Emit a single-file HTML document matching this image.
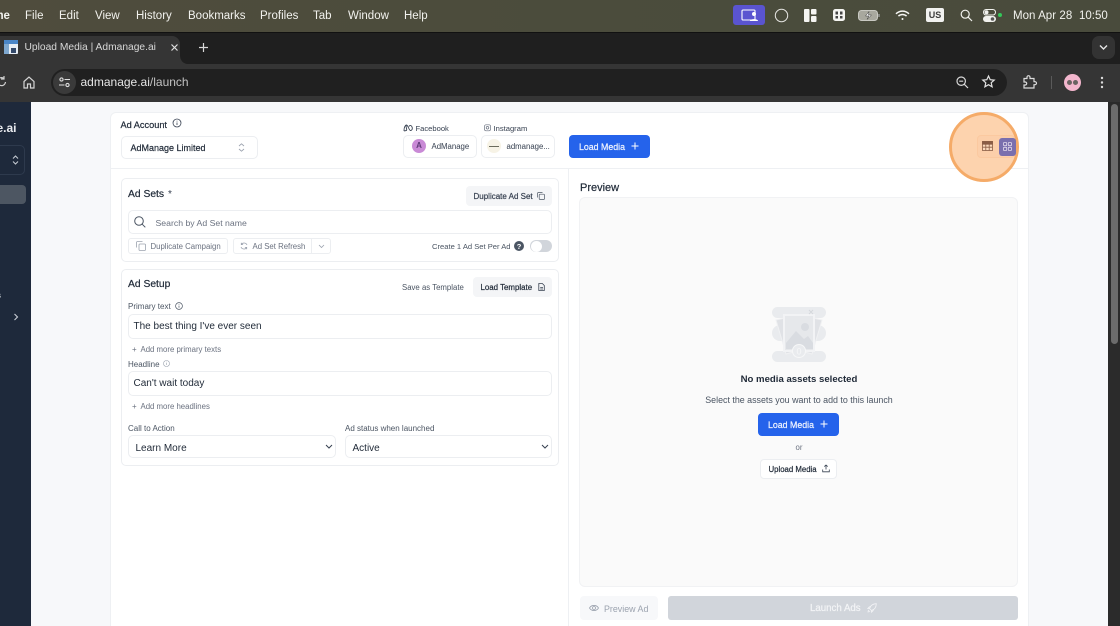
<!DOCTYPE html>
<html lang="en">
<head>
<meta charset="utf-8">
<title>Upload Media | Admanage.ai</title>
<style>
html,body{margin:0;padding:0;width:1120px;height:626px;overflow:hidden;background:#f7f8fa}
body{font-family:"Liberation Sans",sans-serif;position:relative}
#root{position:absolute;left:0;top:0;width:1120px;height:626px;overflow:hidden;filter:blur(.3px)}
.a{position:absolute;box-sizing:border-box}
.t{position:absolute;white-space:nowrap;line-height:14px;height:14px;margin-top:1px}
[style*="font-weight:500"]{-webkit-text-stroke:.2px currentColor}
.m{color:#f2f2ee;font-size:11.5px;top:8px}
.box{background:#fff;border:1px solid #eceef1;border-radius:5px}
.l{font-size:8px;color:#4b5563}
svg{position:absolute;overflow:visible}
</style>
</head>
<body>
<div id="root">
<!-- menu bar -->
<div class="a" style="left:0;top:0;width:1120px;height:32px;background:linear-gradient(90deg,#4f4c3d,#4b4c3c 50%,#494b3c)"></div>
<div class="t m" style="left:-22px;font-weight:bold">Home</div>
<div class="t m" style="left:25px">File</div>
<div class="t m" style="left:59px">Edit</div>
<div class="t m" style="left:95px">View</div>
<div class="t m" style="left:136px">History</div>
<div class="t m" style="left:188px">Bookmarks</div>
<div class="t m" style="left:260px">Profiles</div>
<div class="t m" style="left:313px">Tab</div>
<div class="t m" style="left:348px">Window</div>
<div class="t m" style="left:404px">Help</div>

<div class="a" style="left:733px;top:5px;width:32px;height:20px;background:#5a54d0;border-radius:3px"></div>
<svg style="left:741px;top:9px" width="18" height="12" fill="none"><rect x="1" y="1" width="13" height="10" rx="1" stroke="#fff" stroke-width="1.100"/><circle cx="13" cy="5" r="2" fill="#fff"/><path d="M9 12c0-2.500 8-2.500 8 0z" fill="#fff"/></svg>
<svg style="left:774px;top:8px" width="15" height="15" fill="none"><circle cx="7.500" cy="7.500" r="6.200" stroke="#e8e8e4" stroke-width="1"/></svg>
<svg style="left:804px;top:9px" width="13" height="13"><rect x="0" y="0" width="5.500" height="13" rx="1" fill="#f5f5f2"/><rect x="7" y="0" width="5.500" height="5.500" rx="1" fill="#f5f5f2"/><rect x="7" y="7" width="5.500" height="6" rx="1" fill="#f5f5f2"/></svg>
<svg style="left:833px;top:9px" width="12" height="12"><rect width="12" height="12" rx="2.500" fill="#f5f5f2"/><rect x="2.500" y="2.500" width="2.500" height="3" fill="#444"/><rect x="7" y="2.500" width="2.500" height="3" fill="#444"/><rect x="2.500" y="7" width="2.500" height="2.500" fill="#444"/><rect x="7" y="7" width="2.500" height="2.500" fill="#444"/></svg>
<svg style="left:858px;top:10px" width="22" height="11" fill="none"><rect x=".5" y=".5" width="19" height="10" rx="3" fill="#a8a89e" stroke="#c9c9c2"/><path d="M21 4v3" stroke="#aaa" stroke-width="1.200"/><path d="M11 1.500 7.500 6h3.500L9 9.500 13.500 5H10.500z" fill="#fff" stroke="#333" stroke-width=".5"/></svg>
<svg style="left:895px;top:10px" width="15" height="11" fill="none" stroke="#f5f5f2" stroke-width="1.500"><path d="M1 3.800C4.800.3 10.200.3 14 3.800"/><path d="M3.400 6.100C5.800 4 9.200 4 11.600 6.100"/><circle cx="7.500" cy="9" r="1" fill="#f5f5f2" stroke="none"/></svg>
<div class="a" style="left:926px;top:8px;width:18px;height:14px;background:#f2f2f0;border-radius:2px"></div>
<div class="t" style="left:926px;top:7px;width:18px;text-align:center;font-size:9px;font-weight:bold;color:#3d3d3d">US</div>
<svg style="left:960px;top:9px" width="13" height="13" fill="none" stroke="#f2f2ee" stroke-width="1.200"><circle cx="5.200" cy="5.200" r="4"/><path d="M8.200 8.200 12 12"/></svg>
<svg style="left:983px;top:9px" width="13" height="13"><rect x=".5" y=".5" width="12" height="5.500" rx="2.700" fill="none" stroke="#f2f2ee"/><circle cx="3.500" cy="3.200" r="2" fill="#f2f2ee"/><rect x="0" y="7" width="13" height="6" rx="3" fill="#f2f2ee"/><circle cx="9.500" cy="10" r="1.800" fill="#555"/></svg>
<div class="a" style="left:998px;top:13px;width:4px;height:4px;border-radius:50%;background:#34c759"></div>
<div class="t" style="left:1013px;top:8px;font-size:11.500px;color:#f2f2ee;word-spacing:.2px">Mon Apr 28&nbsp; 10:50</div>

<!-- tab strip -->
<div class="a" style="left:0;top:32px;width:1120px;height:32px;background:#1f1f1f;border-top:1px solid #111"></div>
<div class="a" style="left:0;top:36px;width:180px;height:28px;background:#353535;border-radius:0 8px 0 0"></div>
<svg style="left:180px;top:55px" width="8" height="9"><path d="M0 0v9h8C3 9 0 5 0 0z" fill="#353535"/></svg>
<svg style="left:4px;top:40px" width="14" height="14"><rect width="14" height="14" rx="1" fill="#e8eef5"/><rect width="14" height="4" fill="#4a86c8"/><rect x="0" y="4" width="5" height="10" fill="#7fa8d0"/><rect x="7" y="8" width="5" height="5" fill="#33496a"/></svg>
<div class="t" style="left:24.500px;top:39.500px;font-size:10.250px;color:#d8d8d8">Upload Media | Admanage.ai</div>
<svg style="left:170px;top:43px" width="9" height="9" stroke="#e0e0e0" stroke-width="1.200"><path d="M1.500 1.500l6 6M7.500 1.500l-6 6"/></svg>
<svg style="left:198px;top:42px" width="11" height="11" stroke="#d8d8d8" stroke-width="1.200"><path d="M5.500 1v9M1 5.500h9"/></svg>
<div class="a" style="left:1092px;top:36px;width:23px;height:23px;background:#333;border-radius:7px"></div>
<svg style="left:1099px;top:44px" width="9" height="7" fill="none" stroke="#e5e5e5" stroke-width="1.400"><path d="M1 1.500l3.500 3.500L8 1.500"/></svg>

<!-- toolbar -->
<div class="a" style="left:0;top:64px;width:1120px;height:38px;background:#353535"></div>
<div class="a" style="left:51px;top:69px;width:956px;height:27px;background:#202020;border-radius:14px"></div>
<div class="a" style="left:53px;top:71px;width:23px;height:23px;background:#3a3a3a;border-radius:50%"></div>
<svg style="left:-4px;top:76px" width="11" height="12" fill="none" stroke="#d0d0d0" stroke-width="1.200"><path d="M9.500 6a4 4 0 1 1-1.500-3.500M8 0v3H5"/></svg>
<svg style="left:23px;top:76px" width="12" height="13" fill="none" stroke="#d5d5d5" stroke-width="1.200"><path d="M1 5.500 6 1l5 4.500V12H7.500V8h-3v4H1z"/></svg>
<svg style="left:59px;top:77px" width="11" height="11" fill="none" stroke="#e0e0e0" stroke-width="1.100"><circle cx="2.500" cy="2.500" r="1.600"/><path d="M5.500 2.500H11M0 8h5.500"/><circle cx="8.500" cy="8" r="1.600"/></svg>
<div class="t" style="left:80.500px;top:74px;font-size:12px;color:#e6e6e6">admanage.ai<span style="color:#c2c2c2">/launch</span></div>
<svg style="left:956px;top:76px" width="13" height="13" fill="none" stroke="#d8d8d8" stroke-width="1.200"><circle cx="5.200" cy="5.200" r="4.200"/><path d="M8.300 8.300 12 12M3.200 5.200h4"/></svg>
<svg style="left:982px;top:75px" width="13" height="13" fill="none" stroke="#e2e2e2" stroke-width="1.200"><path d="M6.500 1l1.700 3.700 4 .4-3 2.700.9 4-3.600-2.100-3.600 2.100.9-4-3-2.700 4-.4z"/></svg>
<svg style="left:1023px;top:75px" width="13" height="14" fill="none" stroke="#dcdcdc" stroke-width="1.200"><path d="M1 3.500h3V2.200a1.500 1.500 0 0 1 3 0v1.300h4v3.200h1a1.500 1.500 0 0 1 0 3h-1v3.300H1v-3h1.200a1.500 1.500 0 0 0 0-3H1z"/></svg>
<div class="a" style="left:1051px;top:76px;width:1px;height:13px;background:#5a5a5a"></div>
<div class="a" style="left:1064px;top:74px;width:17px;height:17px;border-radius:50%;background:#f3b6cd"></div>
<div class="a" style="left:1067px;top:80px;width:5px;height:5px;border-radius:50%;background:#6a6261"></div>
<div class="a" style="left:1073px;top:80px;width:5px;height:5px;border-radius:50%;background:#6a6261"></div>
<svg style="left:1100px;top:76px" width="4" height="13" fill="#dcdcdc"><circle cx="2" cy="2" r="1.200"/><circle cx="2" cy="6.500" r="1.200"/><circle cx="2" cy="11" r="1.200"/></svg>

<!-- page -->
<div class="a" style="left:0;top:102px;width:1108px;height:524px;background:#f7f8fa"></div>
<div class="a" style="left:1108px;top:102px;width:12px;height:524px;background:#2b2b2b"></div>
<div class="a" style="left:1111px;top:104px;width:7px;height:240px;background:#6c6c6c;border-radius:4px"></div>

<!-- sidebar -->
<div class="a" style="left:0;top:102px;width:31px;height:524px;background:#1e293b"></div>
<div class="t" style="left:-3.500px;top:119.500px;font-size:12px;font-weight:bold;color:#e8eaee">e.ai</div>
<div class="a" style="left:-6px;top:145px;width:31px;height:30px;border:1px solid #2e3a4d;border-radius:5px"></div>
<svg style="left:12px;top:155px" width="7" height="10" fill="none" stroke="#c9ced6" stroke-width="1"><path d="M1 3.500 3.500 1 6 3.500M1 6.500 3.500 9 6 6.500"/></svg>
<div class="a" style="left:-6px;top:185px;width:31.500px;height:19px;background:#4d5662;border-radius:4px"></div>
<div class="t" style="left:-3px;top:288px;font-size:8px;color:#cfd4da">s</div>
<svg style="left:13px;top:313px" width="6" height="8" fill="none" stroke="#c9ced6" stroke-width="1.100"><path d="M1.500 1l3 3-3 3"/></svg>

<!-- main card -->
<div class="a" style="left:110px;top:112px;width:919px;height:530px;background:#fff;border:1px solid #eef0f3;border-radius:6px"></div>
<div class="a" style="left:111px;top:168px;width:917px;height:1px;background:#eef0f3"></div>
<div class="a" style="left:568px;top:169px;width:1px;height:457px;background:#eef0f3"></div>

<div class="t" style="left:120.500px;top:116.500px;font-size:9.200px;font-weight:500;color:#1f2937">Ad Account</div>
<svg style="left:172px;top:118px" width="10" height="10" fill="none" stroke="#374151" stroke-width=".8"><circle cx="5" cy="5" r="4"/><path d="M5 4.500v2.500M5 2.800v.7"/></svg>
<div class="a box" style="left:120.500px;top:136px;width:137px;height:23px"></div>
<div class="t" style="left:130.500px;top:139.500px;font-size:9px;font-weight:500;color:#1f2937">AdManage Limited</div>
<svg style="left:238px;top:143px" width="7" height="9" fill="none" stroke="#9ca3af" stroke-width=".9"><path d="M1 3 3.500 .8 6 3M1 6 3.500 8.200 6 6"/></svg>

<svg style="left:403px;top:124px" width="10" height="8" fill="none" stroke="#374151" stroke-width=".9"><path d="M1 6.500C1 3 2.500 1 3.500 1 5 1 6 6.500 7.500 6.500 9 6.500 9.500 5 9.200 3.500 8.800 1.500 7 .5 5.800 2.500M3.500 1C2 2.500 5 6.500 3 6.500 2 7 1 7 1 6.500"/></svg>
<div class="t" style="left:415.500px;top:120.500px;font-size:7.600px;color:#374151">Facebook</div>
<svg style="left:484px;top:124px" width="7" height="8" fill="none" stroke="#6b7280" stroke-width=".7"><rect x=".5" y=".8" width="6" height="6" rx="1.500"/><circle cx="3.500" cy="3.800" r="1.300"/></svg>
<div class="t" style="left:493.500px;top:120.500px;font-size:7.600px;color:#374151">Instagram</div>
<div class="a box" style="left:403px;top:135px;width:74px;height:23px"></div>
<div class="a" style="left:412px;top:139px;width:14px;height:14px;border-radius:50%;background:#c98ad6"></div>
<div class="t" style="left:412px;top:138px;width:14px;text-align:center;font-size:8px;font-weight:bold;color:#5f3a78">A</div>
<div class="t" style="left:431.500px;top:138.500px;font-size:7.800px;color:#374151">AdManage</div>
<div class="a box" style="left:481px;top:135px;width:74px;height:23px"></div>
<div class="a" style="left:487px;top:139px;width:14px;height:14px;border-radius:50%;background:#f7f3e6"></div>
<div class="a" style="left:489px;top:145.500px;width:10px;height:1px;background:#6b6b5c"></div>
<div class="t" style="left:506.500px;top:138.500px;font-size:7.800px;color:#374151">admanage...</div>
<div class="a" style="left:569px;top:135px;width:81px;height:23px;background:#2563eb;border-radius:4px"></div>
<div class="t" style="left:579px;top:138.500px;font-size:8.800px;font-weight:500;color:#f1f5ff">Load Media</div>
<svg style="left:631px;top:142px" width="8" height="8" stroke="#fff" stroke-width="1"><path d="M4 .5v7M.5 4h7"/></svg>

<!-- highlight + view toggles -->
<div class="a" style="left:949px;top:112px;width:70px;height:70px;border-radius:50%;background:#fdd3ae;border:3px solid #f5ab68"></div>
<div class="a" style="left:977px;top:135px;width:38px;height:23px;background:#fccfaa;border:1px solid #fbc9a0;border-radius:4px"></div>
<div class="a" style="left:998.500px;top:137.500px;width:17px;height:18px;background:#7a6fae;border-radius:3px"></div>
<svg style="left:982px;top:141px" width="11" height="10" fill="none" stroke="#8a5d45" stroke-width=".8"><rect x=".5" y=".5" width="10" height="9" fill="#fbd9bd"/><path d="M.5 3.200h10M.5 6.200h10M3.800 3.200v6.300M7.200 3.200v6.300"/><rect x=".5" y=".5" width="10" height="2.500" fill="#8a5d45"/></svg>
<svg style="left:1002.500px;top:142px" width="9" height="9" fill="none" stroke="#e5dcec" stroke-width=".8"><rect x=".5" y=".5" width="3.200" height="3.200" rx=".7"/><rect x="5.300" y=".5" width="3.200" height="3.200" rx=".7"/><rect x=".5" y="5.300" width="3.200" height="3.200" rx=".7"/><rect x="5.300" y="5.300" width="3.200" height="3.200" rx=".7"/></svg>

<!-- Ad sets -->
<div class="a box" style="left:121px;top:178px;width:438px;height:84px"></div>
<div class="t" style="left:128px;top:186.500px;font-size:10.300px;font-weight:500;color:#1f2937">Ad Sets</div>
<div class="t" style="left:168px;top:187px;font-size:10px;color:#374151">*</div>
<div class="a" style="left:466px;top:186px;width:86px;height:20px;background:#f4f5f7;border-radius:4px"></div>
<div class="t" style="left:473.500px;top:188.500px;font-size:8px;font-weight:500;color:#374151">Duplicate Ad Set</div>
<svg style="left:537px;top:192px" width="8" height="8" fill="none" stroke="#4b5563" stroke-width=".7"><rect x="2.200" y="2.200" width="5.300" height="5.300" rx="1"/><path d="M5.500 .5h-4a1 1 0 0 0-1 1v4"/></svg>
<div class="a box" style="left:128px;top:210px;width:424px;height:24px"></div>
<svg style="left:134px;top:216px" width="12" height="12" fill="none" stroke="#4b5563" stroke-width="1"><circle cx="5" cy="5" r="4.300"/><path d="M8.200 8.200 11.300 11.300"/></svg>
<div class="t" style="left:155.500px;top:214.500px;font-size:8.700px;color:#6b7280">Search by Ad Set name</div>
<div class="a box" style="left:128px;top:238px;width:100px;height:16px;border-radius:3px"></div>
<svg style="left:136px;top:241px" width="10" height="10" fill="none" stroke="#9ca3af" stroke-width=".8"><rect x="3" y="3" width="6.500" height="6.500" rx="1"/><path d="M6.500 .5H1.500a1 1 0 0 0-1 1v5"/></svg>
<div class="t" style="left:150.500px;top:239px;font-size:7.800px;color:#6b7280">Duplicate Campaign</div>
<div class="a box" style="left:233px;top:238px;width:98px;height:16px;border-radius:3px"></div>
<div class="a" style="left:311px;top:238px;width:1px;height:16px;background:#eceef1"></div>
<svg style="left:240px;top:242px" width="8" height="8" fill="none" stroke="#9ca3af" stroke-width=".8"><path d="M7 3A3.200 3.200 0 0 0 1.300 2.500M1 5a3.200 3.200 0 0 0 5.700.5M1.300 .8v1.800h1.800M6.700 7.200V5.400H4.900"/></svg>
<div class="t" style="left:252.500px;top:239px;font-size:7.800px;color:#6b7280">Ad Set Refresh</div>
<svg style="left:318px;top:244px" width="7" height="5" fill="none" stroke="#9ca3af" stroke-width=".8"><path d="M1 1l2.500 2.500L6 1"/></svg>
<div class="t" style="left:432px;top:239px;font-size:7.600px;color:#4b5563">Create 1 Ad Set Per Ad</div>
<div class="a" style="left:514px;top:241px;width:10px;height:10px;border-radius:50%;background:#4b5563"></div>
<div class="t" style="left:514px;top:238.500px;width:10px;text-align:center;font-size:7.500px;font-weight:bold;color:#fff">?</div>
<div class="a" style="left:530px;top:240px;width:22px;height:12px;border-radius:6px;background:#d1d5db"></div>
<div class="a" style="left:530.500px;top:240.500px;width:11px;height:11px;border-radius:50%;background:#fff"></div>

<!-- Ad setup -->
<div class="a box" style="left:121px;top:269px;width:438px;height:196.500px"></div>
<div class="t" style="left:128px;top:277px;font-size:10.300px;font-weight:500;color:#1f2937">Ad Setup</div>
<div class="t" style="left:402px;top:279.500px;font-size:7.800px;color:#4b5563">Save as Template</div>
<div class="a" style="left:473px;top:277px;width:79px;height:20px;background:#f4f5f7;border-radius:4px"></div>
<div class="t" style="left:480.500px;top:279.500px;font-size:7.900px;font-weight:500;color:#1f2937">Load Template</div>
<svg style="left:538px;top:283px" width="7" height="8" fill="none" stroke="#374151" stroke-width=".8"><path d="M.8.500h3.500L6.300 2.500v5H.8zM2.200 4.500h2.800M2.200 6h2.800"/></svg>
<div class="t l" style="left:128px;top:299px">Primary text</div>
<svg style="left:175px;top:302px" width="8" height="8" fill="none" stroke="#4b5563" stroke-width=".7"><circle cx="4" cy="4" r="3.400"/><path d="M4 3.600v2.200M4 2.200v.7"/></svg>
<div class="a box" style="left:128px;top:314px;width:424px;height:25px"></div>
<div class="t" style="left:133.500px;top:318.500px;font-size:10px;color:#1f2937">The best thing I've ever seen</div>
<div class="t" style="left:132px;top:342px;font-size:8px;color:#6b7280">+</div>
<div class="t" style="left:140.500px;top:342px;font-size:7.800px;color:#6b7280">Add more primary texts</div>
<div class="t l" style="left:128px;top:356.500px">Headline</div>
<svg style="left:163px;top:360px" width="7" height="7" fill="none" stroke="#9ca3af" stroke-width=".6"><circle cx="3.500" cy="3.500" r="3"/><path d="M3.500 3v2M3.500 1.800v.6"/></svg>
<div class="a box" style="left:128px;top:371px;width:424px;height:25px"></div>
<div class="t" style="left:133.500px;top:376px;font-size:10px;color:#1f2937">Can't wait today</div>
<div class="t" style="left:132px;top:399px;font-size:8px;color:#6b7280">+</div>
<div class="t" style="left:140.500px;top:399px;font-size:7.800px;color:#6b7280">Add more headlines</div>
<div class="t l" style="left:128px;top:420.500px">Call to Action</div>
<div class="t l" style="left:345px;top:420.500px">Ad status when launched</div>
<div class="a box" style="left:128px;top:435px;width:208px;height:23px"></div>
<div class="t" style="left:135.500px;top:441px;font-size:10px;color:#1f2937">Learn More</div>
<svg style="left:325px;top:444px" width="8" height="6" fill="none" stroke="#374151" stroke-width="1"><path d="M1 1l3 3 3-3"/></svg>
<div class="a box" style="left:345px;top:435px;width:207px;height:23px"></div>
<div class="t" style="left:352.500px;top:441px;font-size:10px;color:#1f2937">Active</div>
<svg style="left:541px;top:444px" width="8" height="6" fill="none" stroke="#374151" stroke-width="1"><path d="M1 1l3 3 3-3"/></svg>

<!-- preview -->
<div class="t" style="left:580px;top:180px;font-size:11px;font-weight:500;color:#1f2937">Preview</div>
<div class="a" style="left:579px;top:197px;width:439px;height:390px;background:#fafafa;border:1px solid #f1f2f4;border-radius:6px"></div>

<svg style="left:770px;top:305px" width="58" height="60">
<rect x="2" y="2" width="54" height="11" rx="5.500" fill="#e9ebee"/>
<rect x="2" y="46" width="54" height="11" rx="5.500" fill="#e9ebee"/>
<rect x="2" y="20" width="54" height="16" rx="8" fill="#e9ebee"/>
<path d="M6 15l13-3 8 34-11 3z" fill="#e0e2e6" stroke="#f0f1f3"/>
<path d="M52 15l-13-3-8 34 11 3z" fill="#e0e2e6" stroke="#f0f1f3"/>
<rect x="14" y="10" width="30" height="36" fill="#e6e8eb" stroke="#f2f3f5" stroke-width="2"/>
<circle cx="35" cy="22" r="4" fill="#d9dce1"/>
<path d="M16 38l10-12 8 8 4-3 5 7v6H16z" fill="#d9dce1"/>
<circle cx="29" cy="46" r="6.500" fill="#e9ebee" stroke="#f6f7f8"/>
<text x="29" y="49.500" text-anchor="middle" font-size="9" fill="#f6f7f8" font-family="Liberation Sans, sans-serif">0</text>
<path d="M39 5l4 4M43 5l-4 4" stroke="#d5d8dc" stroke-width="1"/>
</svg>

<div class="t" style="left:679px;top:372px;width:240px;text-align:center;font-size:9.600px;font-weight:bold;color:#1f2937">No media assets selected</div>
<div class="t" style="left:679px;top:392px;width:240px;text-align:center;font-size:8.900px;color:#4b5563">Select the assets you want to add to this launch</div>
<div class="a" style="left:758px;top:413px;width:81px;height:23px;background:#2563eb;border-radius:4px"></div>
<div class="t" style="left:768px;top:416.500px;font-size:8.800px;font-weight:500;color:#f1f5ff">Load Media</div>
<svg style="left:820px;top:420px" width="8" height="8" stroke="#fff" stroke-width="1"><path d="M4 .5v7M.5 4h7"/></svg>
<div class="t" style="left:679px;top:440px;width:240px;text-align:center;font-size:7.800px;color:#6b7280">or</div>
<div class="a box" style="left:760px;top:459px;width:77px;height:20px;border-radius:4px"></div>
<div class="t" style="left:768.500px;top:461.500px;font-size:7.800px;font-weight:500;color:#1f2937">Upload Media</div>
<svg style="left:822px;top:464px" width="8" height="9" fill="none" stroke="#374151" stroke-width=".8"><path d="M4 5.500V1M2.300 2.600 4 1l1.700 1.600M.7 5.500v2.300h6.600V5.500"/></svg>

<div class="a" style="left:580px;top:596px;width:78px;height:24px;background:#f7f8fa;border-radius:4px"></div>
<svg style="left:589px;top:604px" width="10" height="8" fill="none" stroke="#9ca3af" stroke-width=".8"><path d="M.5 4C2.500.6 7.500.6 9.500 4 7.500 7.400 2.500 7.400.5 4z"/><circle cx="5" cy="4" r="1.500"/></svg>
<div class="t" style="left:604px;top:600.500px;font-size:8.900px;color:#9ca3af">Preview Ad</div>
<div class="a" style="left:668px;top:596px;width:350px;height:24px;background:#d1d5db;border-radius:3px"></div>
<div class="t" style="left:810px;top:600.500px;font-size:9.700px;font-weight:500;color:#f3f4f6">Launch Ads</div>
<svg style="left:867px;top:603px" width="10" height="10" fill="none" stroke="#f3f4f6" stroke-width=".8"><path d="M2.500 5.500C3.500 2.500 6 .8 9.300.7 9.200 4 7.500 6.500 4.500 7.500zM2.500 5.500H.8L2.400 3.800H4M4.500 7.500v1.700l1.700-1.600V6M2 7c-.8.400-1 1.300-1 2 .7 0 1.600-.2 2-1"/></svg>
</div>
</body>
</html>
